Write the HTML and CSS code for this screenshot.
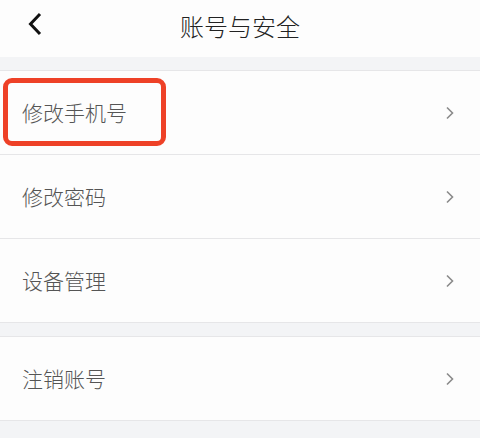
FILE: index.html
```html
<!DOCTYPE html>
<html lang="zh">
<head>
<meta charset="utf-8">
<link rel="stylesheet" href="styles.css">
</head>
<body>
<div class="page">
  <header class="nav">
    <svg class="back" width="16" height="24" viewBox="0 0 16 24"><path d="M13 2 L3.5 12 L13 22" fill="none" stroke="#111" stroke-width="3"/></svg>
    <h1 class="title">账号与安全</h1>
  </header>
  <div class="gap"></div>
  <ul class="group">
    <li class="row highlighted"><span class="label">修改手机号</span><svg class="arrow" width="10" height="14" viewBox="0 0 10 14"><path d="M2 1.5 L7.5 7 L2 12.5" fill="none" stroke="#8a8a8a" stroke-width="1.6"/></svg><span class="mark"></span></li>
    <li class="row"><span class="label">修改密码</span><svg class="arrow" width="10" height="14" viewBox="0 0 10 14"><path d="M2 1.5 L7.5 7 L2 12.5" fill="none" stroke="#8a8a8a" stroke-width="1.6"/></svg></li>
    <li class="row"><span class="label">设备管理</span><svg class="arrow" width="10" height="14" viewBox="0 0 10 14"><path d="M2 1.5 L7.5 7 L2 12.5" fill="none" stroke="#8a8a8a" stroke-width="1.6"/></svg></li>
  </ul>
  <div class="gap"></div>
  <ul class="group">
    <li class="row"><span class="label">注销账号</span><svg class="arrow" width="10" height="14" viewBox="0 0 10 14"><path d="M2 1.5 L7.5 7 L2 12.5" fill="none" stroke="#8a8a8a" stroke-width="1.6"/></svg></li>
  </ul>
</div>
</body>
</html>
```
FILE: styles.css
```css
html, body {
  margin: 0;
  padding: 0;
  background: #f3f4f6;
}
.page {
  width: 480px;
  height: 438px;
  overflow: hidden;
  background: #f3f4f6;
  font-family: "Noto Sans CJK SC", "Noto Sans", sans-serif;
}
.nav {
  height: 57px;
  background: #fdfdfd;
  display: flex;
  align-items: center;
  justify-content: center;
  position: relative;
}
.back {
  position: absolute;
  left: 27px;
  top: 12px;
}
.title {
  margin: 0;
  font-size: 24px;
  font-weight: 300;
  color: #222;
  line-height: 1;
  margin-top: -6px;
}
.gap {
  height: 13px;
}
.group {
  list-style: none;
  margin: 0;
  padding: 0;
  background: #fdfdfd;
  border-top: 1px solid #e6e6e8;
}
.row {
  height: 83px;
  border-bottom: 1px solid #e6e6e8;
  display: flex;
  align-items: center;
  justify-content: space-between;
  padding: 0 25px 0 22px;
  position: relative;
}
.label {
  font-size: 21px;
  font-weight: 300;
  color: #555;
  line-height: 1;
  margin-top: -1px;
}
.arrow {
  display: block;
}
.mark {
  position: absolute;
  left: 3px;
  top: 7px;
  width: 153px;
  height: 58px;
  border: 5px solid #ee4127;
  border-radius: 9px;
}
```
